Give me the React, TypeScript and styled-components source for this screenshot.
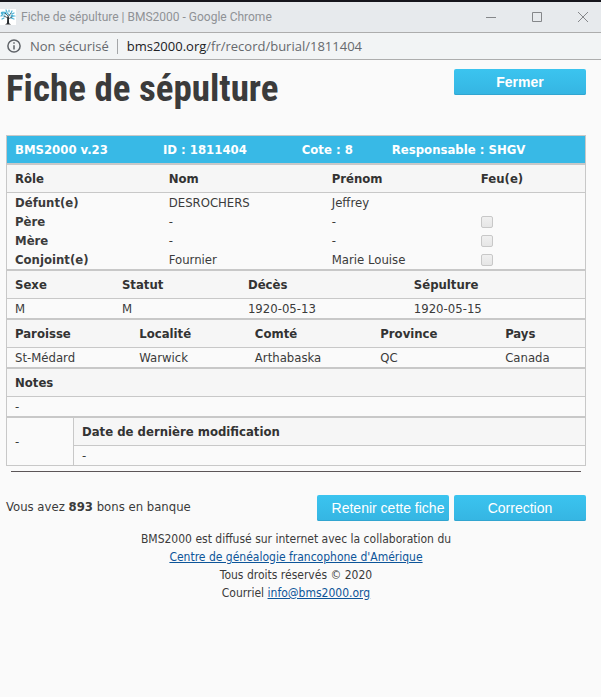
import React from "react";
import styled, { createGlobalStyle } from "styled-components";

const GlobalStyle = createGlobalStyle`
  * { box-sizing: border-box; }
  body {
    margin: 0;
    background: #fafafa;
    color: #3b3b3b;
    font: 13px/18px "DejaVu Sans Condensed", "Noto Sans", sans-serif;
  }
`;

const TitleBar = styled.header`
  display: flex;
  align-items: center;
  height: 33px;
  gap: 5px;
  overflow: hidden;
  background: #e7eaed;
  border-top: 2px solid #16161c;
  border-bottom: 1px solid #adadad;
  color: #8f9296;
  font: 12px/16px Roboto, "Open Sans", sans-serif;
`;

const WindowTitle = styled.span`
  flex: 1;
  white-space: nowrap;
`;

const WindowButtons = styled.div`
  display: flex;
  margin-right: -5px;
`;

const WindowButton = styled.button`
  display: grid;
  place-items: center;
  width: 46px;
  height: 28px;
  padding: 0;
  border: 0;
  background: none;
  color: #85878a;
`;

const AddressBar = styled.div`
  display: flex;
  align-items: center;
  height: 27px;
  padding-left: 7px;
  background: #f2f4f5;
  border-bottom: 1px solid #adadad;
  color: #66696d;
  font: 13px/18px "Open Sans", sans-serif;
  white-space: nowrap;
`;

const Security = styled.span`
  margin-left: 9px;
  padding-right: 8px;
  border-right: 1px solid #a4a6a8;
  line-height: 15px;
`;

const Url = styled.span`
  margin-left: 9px;
`;

const Host = styled.span`
  color: #202124;
`;

const Page = styled.main`
  padding: 9px 15px 0 6px;
`;

const Heading = styled.div`
  display: flex;
  justify-content: space-between;
  align-items: flex-start;
  height: 66px;
`;

const Title = styled.h1`
  margin: 0;
  font: bold 37px/40px "Roboto Condensed", "Liberation Sans Narrow", sans-serif;
`;

const ActionButton = styled.button<{ $bold?: boolean; $indent?: boolean }>`
  width: 132px;
  height: 26px;
  padding: 0 0 0 ${(p) => (p.$indent ? 10 : 0)}px;
  border: 0;
  border-radius: 2px;
  background: linear-gradient(#3bc4ef, #35b5e2);
  box-shadow: inset 0 -1px #31a5d0;
  color: #fff;
  font: ${(p) => (p.$bold ? "bold" : "normal")} 14px/24px "Liberation Sans", sans-serif;
  white-space: nowrap;
`;

const Section = styled.table`
  width: 100%;
  table-layout: fixed;
  border: 1px solid #c8c8c8;
  border-collapse: separate;
  border-spacing: 0;
`;

const HeadCell = styled.th<{ $width?: string; $banner?: boolean }>`
  width: ${(p) => p.$width ?? "auto"};
  height: ${(p) => (p.$banner ? 27 : 28)}px;
  padding: 0 8px;
  border-bottom: ${(p) => (p.$banner ? "0" : "1px solid #c8c8c8")};
  background: ${(p) => (p.$banner ? "#38b9e6" : "#f6f6f6")};
  color: ${(p) => (p.$banner ? "#fff" : "#333")};
  font-weight: bold;
  text-align: left;
  white-space: nowrap;
`;

const Cell = styled.td`
  height: 19px;
  padding: 0 8px;
  white-space: nowrap;
`;

const RoleCell = styled.th`
  height: 19px;
  padding: 0 8px;
  text-align: left;
`;

const SideCell = styled.td`
  width: 67px;
  padding: 0 8px;
  border-right: 1px solid #c8c8c8;
`;

const Tick = styled.input`
  appearance: none;
  display: block;
  width: 12px;
  height: 12px;
  margin: 0;
  border: 1px solid #c8c8c8;
  border-radius: 2px;
  background: linear-gradient(#f0f0f0, #e6e6e6);
`;

const Rule = styled.hr`
  margin: 5px 5px 23px;
  border: 0;
  border-top: 1px solid #5c5658;
`;

const Actions = styled.div`
  display: flex;
  gap: 5px;
`;

const Credit = styled.p`
  flex: 1;
  margin: 0;
  line-height: 24px;
`;

const Footer = styled.footer`
  margin-top: 9px;
  font-size: 12px;
  text-align: center;
`;

const Link = styled.a`
  color: #0d5599;
  text-decoration: underline;
`;

const Favicon = () => (
  <svg width="16" height="16" viewBox="0 0 16 16" aria-hidden="true">
    <rect width="16" height="16" fill="#fff" />
    <g fill="none" stroke="#4fb3d6" strokeWidth="1.2" strokeLinecap="round">
      <path d="M1 7l2-2M2 10l2-1M3 3l2 1M6 1l1 2M9 1v2M12 2l-1 2M14 4l-2 1M15 7l-3 0M14 10l-3-1M5 7l-2 0M7 4l2 2" />
      <circle cx="2" cy="4" r=".7" />
      <circle cx="12" cy="7" r=".9" />
      <circle cx="5" cy="4" r=".9" />
    </g>
    <path d="M8 15V7L5 4M8 9L4 7M8 8l3-4M8 10l4-2" fill="none" stroke="#39454c" strokeWidth=".8" />
    <path d="M5 15.5l2-1.2L7.4 8h1.4l.3 6.3 2 1.2z" fill="#25292c" />
  </svg>
);

const InfoIcon = () => (
  <svg width="14" height="14" viewBox="0 0 14 14" fill="none" stroke="#5f6368" strokeWidth="1.5" aria-hidden="true">
    <circle cx="7" cy="7" r="6.1" />
    <path d="M7 6.2v4.3M7 3.3v1.5" />
  </svg>
);

const windowActions = [
  { label: "Réduire", path: "M0 5.5h10" },
  { label: "Agrandir", path: "M.5 .5h9v9h-9z" },
  { label: "Fermer la fenêtre", path: "M0 0l10 10M10 0L0 10" },
];

const people = [
  { role: "Défunt(e)", last: "DESROCHERS", first: "Jeffrey", tick: false },
  { role: "Père", last: "-", first: "-", tick: true },
  { role: "Mère", last: "-", first: "-", tick: true },
  { role: "Conjoint(e)", last: "Fournier", first: "Marie Louise", tick: true },
];

type Column = { label: string; value?: string; width?: string };

const banner: Column[] = [
  { label: "BMS2000 v.23", width: "25.6%" },
  { label: "ID : 1811404", width: "24%" },
  { label: "Cote : 8", width: "15.6%" },
  { label: "Responsable : SHGV" },
];

const roles: Column[] = [
  { label: "Rôle", width: "26.6%" },
  { label: "Nom", width: "28.2%" },
  { label: "Prénom", width: "25.8%" },
  { label: "Feu(e)" },
];

const dates: Column[] = [
  { label: "Sexe", value: "M", width: "18.5%" },
  { label: "Statut", value: "M", width: "21.8%" },
  { label: "Décès", value: "1920-05-13", width: "28.7%" },
  { label: "Sépulture", value: "1920-05-15" },
];

const places: Column[] = [
  { label: "Paroisse", value: "St-Médard", width: "21.5%" },
  { label: "Localité", value: "Warwick", width: "20%" },
  { label: "Comté", value: "Arthabaska", width: "21.7%" },
  { label: "Province", value: "QC", width: "21.6%" },
  { label: "Pays", value: "Canada" },
];

const notes: Column[] = [{ label: "Notes", value: "-" }];

const HeadRow = ({ columns, isBanner }: { columns: Column[]; isBanner?: boolean }) => (
  <thead>
    <tr>
      {columns.map((c) => (
        <HeadCell key={c.label} scope="col" $width={c.width} $banner={isBanner}>
          {c.label}
        </HeadCell>
      ))}
    </tr>
  </thead>
);

const Details = ({ columns }: { columns: Column[] }) => (
  <Section>
    <HeadRow columns={columns} />
    <tbody>
      <tr>
        {columns.map((c) => (
          <Cell key={c.label}>{c.value}</Cell>
        ))}
      </tr>
    </tbody>
  </Section>
);

export default function App() {
  return (
    <>
      <GlobalStyle />
      <TitleBar>
        <Favicon />
        <WindowTitle>Fiche de sépulture | BMS2000 - Google Chrome</WindowTitle>
        <WindowButtons>
          {windowActions.map((a) => (
            <WindowButton key={a.label} type="button" aria-label={a.label}>
              <svg width="10" height="10" viewBox="0 0 10 10" fill="none" stroke="currentColor">
                <path d={a.path} />
              </svg>
            </WindowButton>
          ))}
        </WindowButtons>
      </TitleBar>
      <AddressBar>
        <InfoIcon />
        <Security>Non sécurisé</Security>
        <Url>
          <Host>bms2000.org</Host>/fr/record/burial/1811404
        </Url>
      </AddressBar>
      <Page>
        <Heading>
          <Title>Fiche de sépulture</Title>
          <ActionButton type="button" $bold>
            Fermer
          </ActionButton>
        </Heading>
        <Section>
          <HeadRow columns={banner} isBanner />
        </Section>
        <Section>
          <HeadRow columns={roles} />
          <tbody>
            {people.map((p) => (
              <tr key={p.role}>
                <RoleCell scope="row">{p.role}</RoleCell>
                <Cell>{p.last}</Cell>
                <Cell>{p.first}</Cell>
                <Cell>{p.tick && <Tick type="checkbox" aria-label={`Feu(e) : ${p.role}`} />}</Cell>
              </tr>
            ))}
          </tbody>
        </Section>
        <Details columns={dates} />
        <Details columns={places} />
        <Details columns={notes} />
        <Section>
          <tbody>
            <tr>
              <SideCell rowSpan={2}>-</SideCell>
              <HeadCell scope="col">Date de dernière modification</HeadCell>
            </tr>
            <tr>
              <Cell>-</Cell>
            </tr>
          </tbody>
        </Section>
        <Rule />
        <Actions>
          <Credit>
            Vous avez <b>893</b> bons en banque
          </Credit>
          <ActionButton type="button" $indent>
            Retenir cette fiche
          </ActionButton>
          <ActionButton type="button">Correction</ActionButton>
        </Actions>
        <Footer>
          <div>BMS2000 est diffusé sur internet avec la collaboration du</div>
          <div>
            <Link href="#centre">Centre de généalogie francophone d'Amérique</Link>
          </div>
          <div>Tous droits réservés © 2020</div>
          <div>
            Courriel <Link href="mailto:info@bms2000.org">info@bms2000.org</Link>
          </div>
        </Footer>
      </Page>
    </>
  );
}
